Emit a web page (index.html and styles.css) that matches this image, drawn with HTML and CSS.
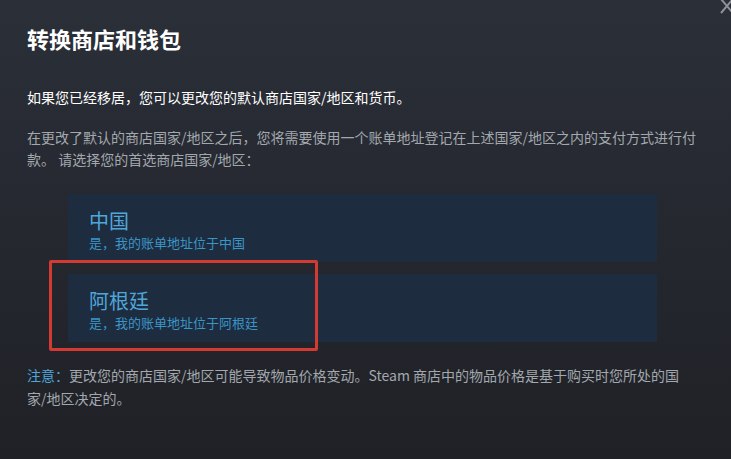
FILE: index.html
```html
<!DOCTYPE html>
<html lang="zh-CN">
<head>
<meta charset="utf-8">
<title>转换商店和钱包</title>
<link rel="stylesheet" href="styles.css">
</head>
<body>
<div class="modal">
  <svg class="close" width="16" height="16" viewBox="0 0 16 16" aria-label="关闭"><path d="M2 1 L14 15 M14 1 L2 15" stroke="#8e9197" stroke-width="2" fill="none"/></svg>
  <h1 class="title">转换商店和钱包</h1>
  <p class="lead">如果您已经移居，您可以更改您的默认商店国家/地区和货币。</p>
  <p class="desc">在更改了默认的商店国家/地区之后，您将需要使用一个账单地址登记在上述国家/地区之内的支付方式进行付款。 请选择您的首选商店国家/地区：</p>
  <div class="options">
    <div class="option">
      <div class="opt-name">中国</div>
      <div class="opt-sub">是，我的账单地址位于中国</div>
    </div>
    <div class="option">
      <div class="opt-name">阿根廷</div>
      <div class="opt-sub">是，我的账单地址位于阿根廷</div>
      <div class="highlight"></div>
    </div>
  </div>
  <p class="note"><span class="note-label">注意：</span>更改您的商店国家/地区可能导致物品价格变动。Steam 商店中的物品价格是基于购买时您所处的国家/地区决定的。</p>
</div>
</body>
</html>
```
FILE: styles.css
```css
html, body {
  margin: 0;
  padding: 0;
  height: 100%;
  overflow: hidden;
}
body {
  background: linear-gradient(180deg, #2b2f38 0%, #24272e 55%, #1f2126 100%);
  font-family: "Noto Sans CJK SC", "Noto Sans", sans-serif;
  color: #acb2b8;
}
.modal {
  position: relative;
  height: 459px;
  padding: 23px 31px 0 27px;
  box-sizing: border-box;
}
.close {
  position: absolute;
  top: -2px;
  left: 719px;
}
.title {
  margin: 0;
  font-size: 22px;
  line-height: 30px;
  font-weight: 700;
  color: #ffffff;
}
.lead {
  margin: 33px 0 0;
  font-size: 14px;
  line-height: 22px;
  color: #ffffff;
}
.desc {
  margin: 18px 0 0;
  font-size: 14px;
  line-height: 22px;
  color: #a3a8ae;
}
.options {
  margin: 24px 43px 0 41px;
  display: flex;
  flex-direction: column;
  gap: 12px;
}
.option {
  position: relative;
  background: #1d2c3e;
  padding: 14px 20px 10px 21px;
}
.opt-name {
  font-size: 20px;
  line-height: 26px;
  color: #4fa6da;
}
.opt-sub {
  font-size: 13px;
  line-height: 18px;
  color: #3b95c8;
}
.highlight {
  position: absolute;
  left: -19px;
  top: -14px;
  width: 269px;
  height: 91px;
  border: 3px solid #d23a32;
  box-sizing: border-box;
  border-radius: 2px;
}
.note {
  margin: 22px 12px 0 0;
  font-size: 14px;
  line-height: 23px;
  color: #a3a8ae;
}
.note-label {
  color: #4fa6da;
}
```
